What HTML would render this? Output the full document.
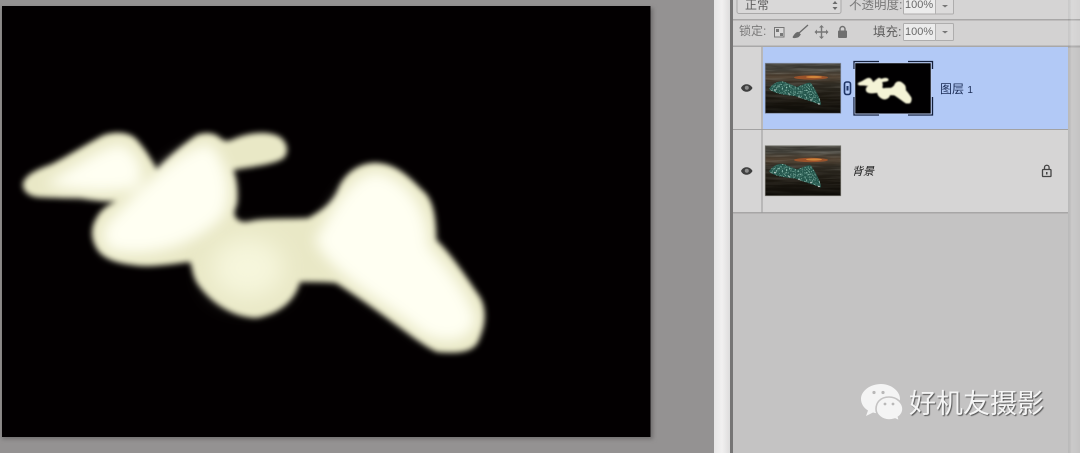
<!DOCTYPE html>
<html><head><meta charset="utf-8">
<style>
html,body{margin:0;padding:0;width:1080px;height:453px;overflow:hidden;background:#949292}
body{position:relative;font-family:"Liberation Sans","Noto Sans CJK SC",sans-serif}
.a{position:absolute}
.t{position:absolute;white-space:nowrap;line-height:1;filter:blur(.3px)}
</style></head><body>
<svg class="a" style="left:0;top:0" width="1080" height="453" viewBox="0 0 1080 453">
<defs>
<filter id="b3" x="-10%" y="-10%" width="120%" height="120%"><feGaussianBlur stdDeviation="3"/></filter>
<filter id="b9" x="-10%" y="-10%" width="120%" height="120%"><feGaussianBlur stdDeviation="7"/></filter>
<filter id="b12" x="-50%" y="-50%" width="200%" height="200%"><feGaussianBlur stdDeviation="12"/></filter>
<filter id="b05" x="-5%" y="-5%" width="110%" height="110%"><feGaussianBlur stdDeviation=".35"/></filter>
<filter id="s2" x="-20%" y="-20%" width="140%" height="140%"><feGaussianBlur stdDeviation="2"/></filter>
<filter id="streak" x="0" y="0" width="100%" height="100%">
<feTurbulence type="fractalNoise" baseFrequency=".025 .35" numOctaves="3" seed="5"/>
<feColorMatrix values="0 0 0 0 .5  0 0 0 0 .48  0 0 0 0 .42  1.6 0 0 0 -.62"/>
</filter>
<filter id="speck" x="0" y="0" width="100%" height="100%">
<feTurbulence type="fractalNoise" baseFrequency=".7" numOctaves="2" seed="3"/>
<feColorMatrix values="0 0 0 0 .42  0 0 0 0 .72  0 0 0 0 .62  3 0 0 0 -1.5"/>
<feComposite in2="SourceAlpha" operator="in"/>
</filter>
<linearGradient id="sky" x1="0" y1="0" x2="0" y2="1">
<stop offset="0" stop-color="#302e29"/><stop offset=".14" stop-color="#403e37"/><stop offset=".28" stop-color="#4a3a2a"/><stop offset=".42" stop-color="#2e2a22"/><stop offset=".7" stop-color="#1a160f"/><stop offset="1" stop-color="#0e0c08"/>
</linearGradient>
<linearGradient id="fade" x1="0" y1="0" x2="0" y2="1"><stop offset="0" stop-color="#fff"/><stop offset=".5" stop-color="#888"/><stop offset="1" stop-color="#222"/></linearGradient>
<mask id="fm"><rect width="76" height="50" fill="url(#fade)"/></mask>
<linearGradient id="edge" x1="0" y1="0" x2="1" y2="0"><stop offset="0" stop-color="#e6e5e5"/><stop offset=".5" stop-color="#f1f0f0"/><stop offset="1" stop-color="#dddcdc"/></linearGradient>
<linearGradient id="rt" x1="0" y1="0" x2="1" y2="0"><stop offset="0" stop-color="#000" stop-opacity=".05"/><stop offset=".3" stop-color="#fff" stop-opacity=".12"/><stop offset="1" stop-color="#fff" stop-opacity="0"/></linearGradient>
<path id="blob" d="M23 183 C26 174 38 169 52 164 C68 156 90 142 104 135 C116 131 130 132 137 140 C145 149 152 160 157 170 C170 155 188 141 197 135 C206 132 214 133 219 137 C226 143 228 141 236 138 C248 133 268 130 280 137 C288 143 289 152 284 158 C274 165 250 167 233 170 C237 180 238 192 237 203 C236 208 232 213 236 218 C242 224 246 222 256 220 C272 218 290 219 308 218 C322 210 332 204 338 190 C343 176 356 163 376 163 C396 164 408 176 422 190 C432 198 436 212 436 240 C450 252 468 280 480 297 C486 308 486 322 480 337 C476 352 462 354 437 352 C420 345 380 310 336 283 C324 282 312 282 300 282 C296 296 286 312 257 318 C236 318 212 305 197 283 C192 274 192 266 190 262 C172 264 150 268 133 265 C116 263 100 258 95 245 C90 235 92 225 97 217 C102 208 110 204 117 201 C100 202 88 199 80 198 C64 198 46 198 36 197 C27 195 22 190 23 183 Z"/>
<path id="inner" d="M45 184 C70 170 100 146 122 144 C140 155 148 172 136 188 C110 194 75 192 45 184 Z M108 222 C140 190 180 146 210 144 C230 165 234 200 222 218 C196 244 150 260 110 250 C100 240 102 230 108 222 Z M315 240 C330 215 350 172 378 172 C410 180 430 215 428 245 C445 265 470 295 476 320 C470 345 440 345 420 332 C390 305 330 275 315 240 Z"/>
<g id="photo">
<rect width="76" height="50" fill="url(#sky)"/>
<g mask="url(#fm)"><rect width="76" height="50" filter="url(#streak)" opacity=".55"/></g>
<ellipse cx="46" cy="14.5" rx="17" ry="2.2" fill="#a7562a" opacity=".85" filter="url(#b05)"/>
<ellipse cx="49" cy="14" rx="8" ry="1.1" fill="#d1853a" filter="url(#b05)"/>
<path d="M4 26 C8 20 14 17 20 19 L32 24 C38 22 42 19 46 20 C50 26 56 36 56 42 C46 38 40 37 30 33 C20 32 10 31 4 26Z" fill="#24564c"/>
<path d="M4 26 C8 20 14 17 20 19 L32 24 C38 22 42 19 46 20 C50 26 56 36 56 42 C46 38 40 37 30 33 C20 32 10 31 4 26Z" filter="url(#speck)"/>
<circle cx="10" cy="27" r=".7" fill="#eee"/><circle cx="24" cy="31" r=".6" fill="#ddd"/><circle cx="34" cy="34" r=".6" fill="#eee"/><circle cx="46" cy="37" r=".7" fill="#ddd"/><circle cx="54" cy="41" r=".7" fill="#fff"/>
</g>
</defs>

<!-- workspace -->
<rect width="716" height="453" fill="#949292"/>
<!-- canvas -->
<rect x="2" y="8" width="651" height="431" fill="#6f6d6d" filter="url(#s2)"/>
<rect x="2" y="6" width="648.5" height="431" fill="#030001"/>
<g filter="url(#b3)"><use href="#blob" fill="#e9e8c6"/></g>
<g filter="url(#b9)"><use href="#inner" fill="#fffff2"/></g>
<ellipse cx="248" cy="268" rx="36" ry="30" fill="#f6f6dc" filter="url(#b12)"/>

<!-- divider -->
<rect x="714" width="16" height="453" fill="url(#edge)"/>
<rect x="730" width="3" height="453" fill="#767575"/>

<!-- panel -->
<rect x="733" width="347" height="453" fill="#c4c3c3"/>
<rect x="733" y="0" width="347" height="19" fill="#d5d4d4"/>
<rect x="733" y="19" width="347" height="1.5" fill="#a8a7a7"/>
<rect x="733" y="20.5" width="347" height="25" fill="#d3d2d2"/>
<rect x="733" y="45.5" width="347" height="2" fill="#a9a8a8"/>
<rect x="733" y="47" width="335" height="82" fill="#d6d5d5"/>
<rect x="763" y="47" width="305" height="82" fill="#b2c9f6"/>
<rect x="733" y="129" width="335" height="1" fill="#a3a2a2"/>
<rect x="733" y="130" width="335" height="82" fill="#d6d5d5"/>
<rect x="733" y="212" width="335" height="1.5" fill="#a7a6a6"/>
<rect x="761.5" y="47" width="1" height="166" fill="#9a9999"/>
<rect x="1068" y="0" width="12" height="453" fill="url(#rt)"/>

<!-- dropdown -->
<rect x="737" y="-3" width="104" height="16.5" rx="2" fill="#d9d8d8" stroke="#a9a8a8"/>
<path d="M832.5 4 L835 1 L837.5 4Z M832.5 7 L835 10 L837.5 7Z" fill="#6a6a6a"/>
<!-- opacity field -->
<rect x="903.5" y="-3" width="50" height="17" rx="1" fill="#dcdbdb" stroke="#aeadad"/>
<rect x="904" y="-3" width="31" height="16.5" fill="#ececec"/>
<rect x="935" y="-3" width="1" height="17" fill="#b3b2b2"/>
<path d="M942 5 h6 l-3 2.5z" fill="#777"/>
<!-- fill field -->
<rect x="903.5" y="23.5" width="50" height="17" rx="1" fill="#dcdbdb" stroke="#aeadad"/>
<rect x="904" y="24" width="31" height="16" fill="#ececec"/>
<rect x="935" y="24" width="1" height="17" fill="#b3b2b2"/>
<path d="M942 31 h6 l-3 2.5z" fill="#777"/>

<!-- lock icons -->
<rect x="774.5" y="27.5" width="9.5" height="9.5" fill="#d9d8d8" stroke="#777"/>
<rect x="776" y="29" width="3" height="3" fill="#777"/><rect x="780" y="33" width="3" height="3" fill="#777"/>
<path d="M808 25 L799 33 M797 37 C793 38 794 37 793 37.5 C795 35 795 33 798 32.5 L800 34.5 C799 36 798 37 797 37Z" stroke="#6b6b6b" stroke-width="1.3" fill="#6b6b6b"/>
<path d="M821.5 26 L821.5 38 M815.5 32 L827.5 32" stroke="#777" stroke-width="1.4"/>
<path d="M821.5 25 l-2.5 2.5 h5z M821.5 39 l-2.5 -2.5 h5z M814.5 32 l2.5 -2.5 v5z M828.5 32 l-2.5 -2.5 v5z" fill="#777"/>
<rect x="838" y="30.5" width="9" height="7.5" rx="1" fill="#6f6f6f"/>
<path d="M840 31 v-2 a2.5 2.5 0 0 1 5 0 v2" fill="none" stroke="#6f6f6f" stroke-width="1.4"/>

<!-- eyes -->
<path d="M741 88 C743 83 750 83 752.5 88 C750 93 743 93 741 88Z" fill="#3f3f3f"/><circle cx="746.8" cy="87.8" r="2" fill="#8d8d8d"/>
<g transform="translate(0,83)"><path d="M741 88 C743 83 750 83 752.5 88 C750 93 743 93 741 88Z" fill="#3f3f3f"/><circle cx="746.8" cy="87.8" r="2" fill="#8d8d8d"/></g>

<!-- thumbs -->
<g transform="translate(765,63)"><use href="#photo"/><rect x=".25" y=".25" width="75.5" height="50" fill="none" stroke="#7d8799" stroke-width=".7"/></g>
<g transform="translate(765,145.5)"><use href="#photo"/><rect x=".25" y=".25" width="75.5" height="50" fill="none" stroke="#77766f" stroke-width=".7"/></g>

<!-- link icon -->
<rect x="844.5" y="82" width="6" height="12.5" rx="2" fill="#b2c9f6" stroke="#1f3566" stroke-width="1.6"/>
<rect x="846.5" y="86" width="2" height="4.5" fill="#1f3566"/>

<!-- mask thumb -->
<rect x="855" y="63" width="76" height="50.5" fill="#010001"/>
<g transform="translate(855,62.3) scale(.1169)"><use href="#blob" fill="#f4f3d6" filter="url(#b9)"/></g>
<path d="M854 69 V61.5 H879 M908 61.5 H932.5 V69 M854 97 V115 H879 M908 115 H932.5 V97" fill="none" stroke="#14203c" stroke-width="1.3"/>
<path d="M855 63 V114 H931 V63 H855" fill="none" stroke="#c9d6ee" stroke-width=".6"/>

<!-- bottom lock -->
<rect x="1042.5" y="169.5" width="8.5" height="7" rx=".8" fill="#d4d3d3" stroke="#444" stroke-width="1.3"/>
<path d="M1044.5 169 v-1.5 a2.3 2.3 0 0 1 4.6 0 v1.5" fill="none" stroke="#444" stroke-width="1.3"/>
<rect x="1046" y="172" width="1.5" height="2.5" fill="#444"/>

<!-- wechat logo -->
<g>
<path d="M881 384 C870 384 861 391 861 399 C861 404 864 408 868 410.5 L866 416 L873 412.5 C876 413.5 880 413.5 882 413 C892 412 900 406 900 399 C900 391 891 384 881 384Z" fill="#f4f4f4"/>
<path d="M889 397 C880 397 876 403 876 409 C876 415 882 420 889 420 C891 420 893 419.6 895 419 L899.5 421 L898.5 417 C901.5 415 903 412 903 409 C903 403 897 397 889 397Z" fill="#f4f4f4" stroke="#c4c3c3" stroke-width="1.6"/>
<circle cx="874" cy="392.5" r="1.6" fill="#b9b8b8"/><circle cx="883" cy="392.5" r="1.6" fill="#b9b8b8"/>
<circle cx="885" cy="404" r="1.4" fill="#b9b8b8"/><circle cx="893" cy="404" r="1.4" fill="#b9b8b8"/>
</g>
</svg>

<div class="t" style="left:745px;top:-1px;font-size:12px;color:#5f5e5e">正常</div>
<div class="t" style="left:849px;top:-1px;font-size:12.5px;color:#7a7979">不透明度:</div>
<div class="t" style="left:905px;top:0;font-size:11px;color:#6a6a6a">100%</div>
<div class="t" style="left:739px;top:25px;font-size:12px;color:#7a7979">锁定:</div>
<div class="t" style="left:873px;top:26px;font-size:12.5px;color:#5f5e5e">填充:</div>
<div class="t" style="left:905px;top:27px;font-size:11px;color:#6a6a6a">100%</div>
<div class="t" style="left:940px;top:83px;font-size:12px;color:#1b2c55">图层 <span style="font-size:10px">1</span></div>
<div class="t" style="left:852px;top:167px;font-size:11px;color:#1a1a1a;font-style:italic">背景</div>
<div class="t" style="left:909px;top:391px;font-size:27px;color:#f5f5f5;text-shadow:1px 1px 1px #555">好机友摄影</div>
</body></html>
